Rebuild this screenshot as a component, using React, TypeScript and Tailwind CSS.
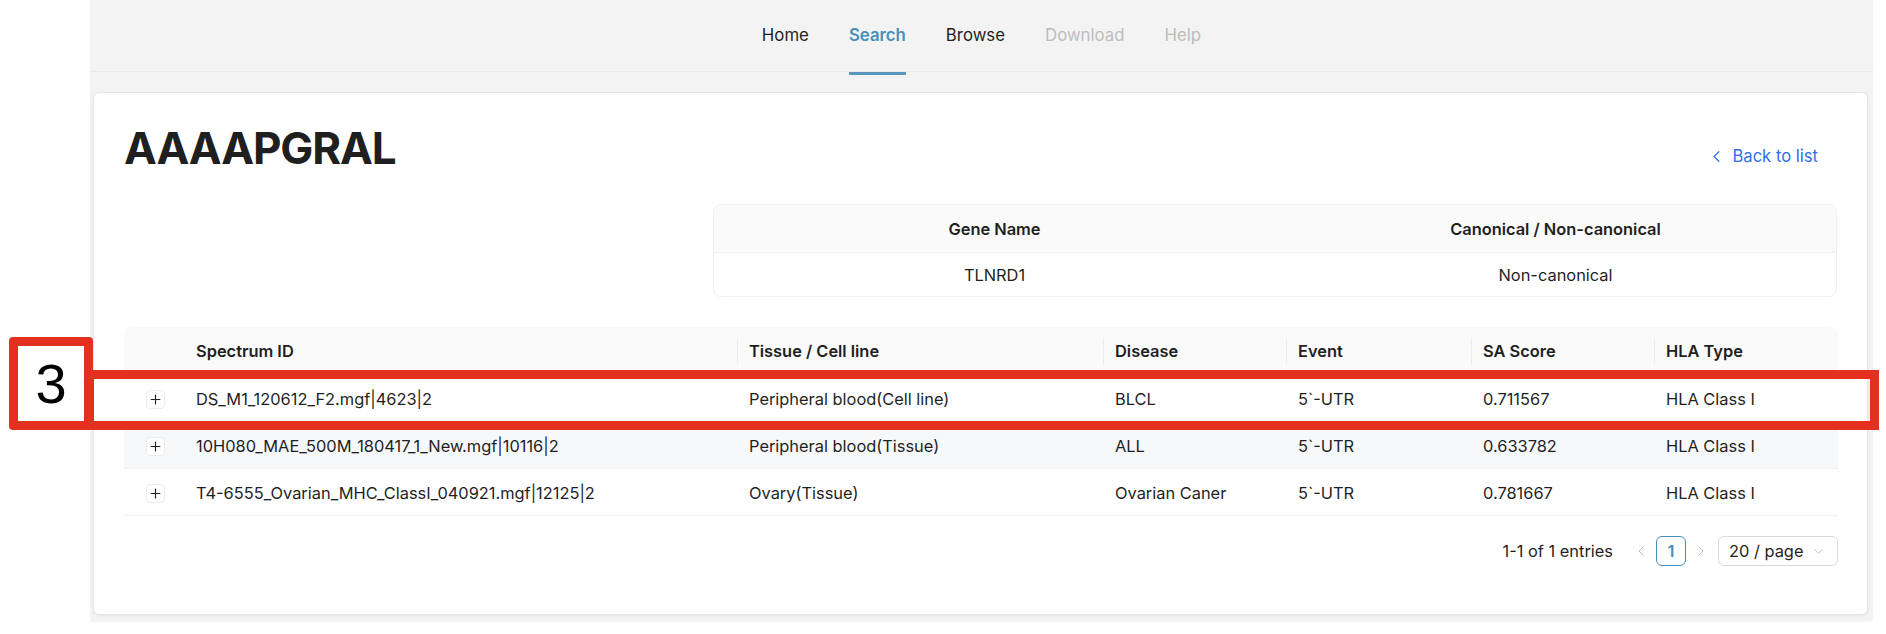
import { ChevronLeft, ChevronRight, ChevronDown, Plus } from "lucide-react"

const navItems = [
  { label: "Home", state: "normal" },
  { label: "Search", state: "active" },
  { label: "Browse", state: "normal" },
  { label: "Download", state: "disabled" },
  { label: "Help", state: "disabled" },
]

const columns = ["", "Spectrum ID", "Tissue / Cell line", "Disease", "Event", "SA Score", "HLA Type"]

const rows = [
  ["DS_M1_120612_F2.mgf|4623|2", "Peripheral blood(Cell line)", "BLCL", "5`-UTR", "0.711567", "HLA Class I"],
  ["10H080_MAE_500M_180417_1_New.mgf|10116|2", "Peripheral blood(Tissue)", "ALL", "5`-UTR", "0.633782", "HLA Class I"],
  ["T4-6555_Ovarian_MHC_ClassI_040921.mgf|12125|2", "Ovary(Tissue)", "Ovarian Caner", "5`-UTR", "0.781667", "HLA Class I"],
]

const grid = "grid grid-cols-[60px_553px_366px_183px_185px_183px_184px]"

export default function App() {
  return (
    <div className="relative flex h-[634px] w-[1886px] bg-white font-['Inter',sans-serif] text-[16.4px] text-[#1f1f1f]">
      <div className="ml-[90px] flex h-[622px] w-[1783px] flex-col bg-[#f3f3f3]">
        {/* Top menu */}
        <nav className="flex h-[72px] shrink-0 justify-center border-b border-[#e8e8e8] text-[16.8px]">
          {navItems.map((item) => (
            <div
              key={item.label}
              className={
                item.state === "active"
                  ? "relative flex items-center px-5 font-semibold text-[#4a8fb9]"
                  : item.state === "disabled"
                    ? "flex items-center px-5 text-[#bdbdbd]"
                    : "flex items-center px-5 text-[#1f1f1f]"
              }
            >
              {item.label}
              {item.state === "active" && (
                <span className="absolute bottom-[-4px] left-5 right-5 h-[3px] bg-[#5a97bd]" />
              )}
            </div>
          ))}
        </nav>

        {/* Card */}
        <div className="ml-[3px] mt-[20px] h-[523px] w-[1775px] rounded-[6px] border border-[#e6e6e6] bg-white px-[30px] pt-[29px] shadow-[0_1px_3px_rgba(0,0,0,0.06)]">
          <div className="flex items-start justify-between">
            <h1 className="text-[44px] font-bold leading-[53px] tracking-[-1.1px] text-[#1f1f1f]">AAAAPGRAL</h1>
            <a className="mr-[19px] mt-[22px] flex items-center gap-[6px] text-[16.6px] leading-[24px] text-[#2f6fec]">
              <ChevronLeft className="h-[19px] w-[19px]" strokeWidth={1.5} />
              Back to list
            </a>
          </div>

          {/* Gene table */}
          <div className="mt-[29px] flex justify-end">
            <div className="w-[1124px] overflow-hidden rounded-[8px] border border-[#f0f0f0]">
              <div className="grid h-[48px] grid-cols-2 items-center border-b border-[#f0f0f0] bg-[#fafafa] pt-[2px] text-center font-semibold">
                <div>Gene Name</div>
                <div>Canonical / Non-canonical</div>
              </div>
              <div className="grid h-[43px] grid-cols-2 items-center pt-[2px] text-center">
                <div>TLNRD1</div>
                <div>Non-canonical</div>
              </div>
            </div>
          </div>

          {/* Main table */}
          <div className="mt-[30px] w-[1714px]">
            <div className={`${grid} h-[48px] items-center rounded-t-[8px] border-b border-[#f0f0f0] bg-[#fafafa] pt-[2px] font-semibold`}>
              {columns.map((c, i) => (
                <div key={i} className="relative px-3">
                  {i > 1 && <span className="absolute left-0 top-1/2 h-[27px] w-px -translate-y-1/2 bg-[#ececec]" />}
                  {c}
                </div>
              ))}
            </div>
            {rows.map((row, r) => (
              <div
                key={r}
                className={`${grid} h-[47px] items-center border-b border-[#f0f0f0] pt-[2px] ${r === 1 ? "bg-[#f7f8fa]" : "bg-white"}`}
              >
                <div className="flex justify-center pl-[2px]">
                  <span className="flex h-[19px] w-[19px] items-center justify-center rounded-[4px] border border-[#ececec] bg-white">
                    <Plus className="h-[15px] w-[15px] text-[#1f1f1f]" strokeWidth={1.8} />
                  </span>
                </div>
                {row.map((cell, i) => (
                  <div key={i} className="px-3">
                    {cell}
                  </div>
                ))}
              </div>
            ))}
          </div>

          {/* Pagination */}
          <div className="mt-[20px] flex h-[30px] w-[1714px] items-center justify-end">
            <span className="mr-[20px]">1-1 of 1 entries</span>
            <ChevronLeft className="mr-[7px] h-[16px] w-[16px] text-[#bdbdbd]" strokeWidth={1.5} />
            <span className="flex h-[30px] w-[30px] items-center justify-center rounded-[6px] border border-[#4a8fb9] font-semibold text-[#4a8fb9]">
              1
            </span>
            <ChevronRight className="ml-[7px] mr-[9px] h-[16px] w-[16px] text-[#bdbdbd]" strokeWidth={1.5} />
            <div className="flex h-[30px] w-[120px] items-center justify-between rounded-[6px] border border-[#d9d9d9] pl-[10px] pr-[11px]">
              <span>20 / page</span>
              <ChevronDown className="h-[15px] w-[15px] text-[#bdbdbd]" strokeWidth={1.4} />
            </div>
          </div>
        </div>
      </div>

      {/* Annotation */}
      <div className="absolute left-[85px] top-[370px] h-[60px] w-[1794px] border-[9px] border-[#e3301f]" />
      <div className="absolute left-[9px] top-[337px] flex h-[93px] w-[84px] items-center justify-center rounded-[4px] border-[9px] border-[#e3301f] bg-white font-['Liberation_Sans',sans-serif] text-[56px] leading-none text-black">
        3
      </div>
    </div>
  )
}
